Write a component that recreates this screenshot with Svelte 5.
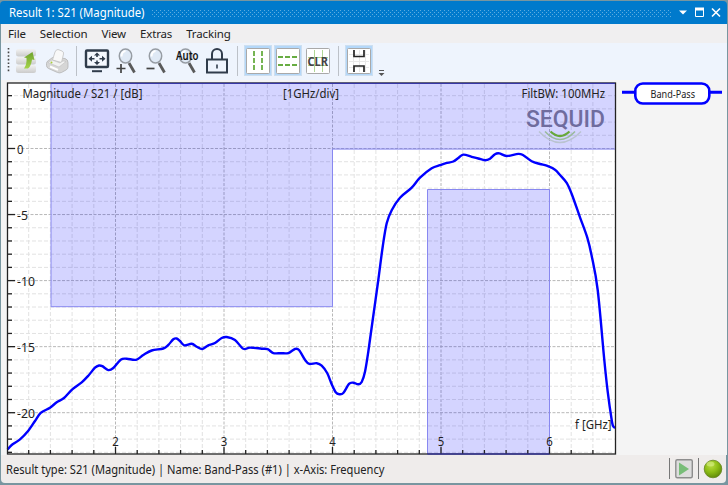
<script lang="ts">
    type Point = [number, number];

    const menus = ['File', 'Selection', 'View', 'Extras', 'Tracking'];

    /** ---------- Axis scales, in chart units ---------- */
    const fx = (ghz: number) => 115.5 + (ghz - 2) * 108.5;
    const fy = (db: number) => 148.5 - db * 13.21;

    const xs = Array.from({ length: 28 }, (_, i) => ({ v: 1.2 + i * 0.2, major: i % 5 === 4 }))
        .filter((t) => t.v < 6.5);
    const ys = Array.from({ length: 28 }, (_, i) => ({ v: 4 - i, major: (4 - i) % 5 === 0 }))
        .filter((t) => t.v > -24);

    /** ---------- Measured trace ---------- */
    const trace: Point[] = [
        [7.5, 449.5], [11.7, 445], [20, 439.3], [28.3, 430.7], [35, 421], [40.7, 412.9], [50, 407.7],
        [56.7, 402.3], [64, 398], [72.3, 389.3], [81.7, 382.3], [88.3, 375.7], [95, 367.7], [99, 365.5],
        [102.3, 366.2], [108.3, 370.1], [113.3, 368], [120.7, 359.7], [126.7, 358.7], [136, 359.8],
        [143.3, 355], [151.7, 350.5], [163.3, 348.5], [168.3, 345], [173.3, 339.3], [176.7, 338.5],
        [180, 341], [184.3, 345.3], [191.7, 343.7], [196.7, 346.7], [202.3, 349], [208.3, 345.3],
        [215, 343], [221.7, 338], [226.7, 337], [235, 340], [243.3, 348.8], [250, 347.6], [261.7, 348.7],
        [267.7, 349.2], [273.3, 353.1], [281, 353.2], [288.3, 353.1], [295, 349], [299, 350],
        [305, 359.8], [309.3, 363.9], [316.7, 363.2], [321.7, 365.7], [327.3, 373.3], [331.7, 384.3],
        [335.7, 392.3], [339.3, 394.2], [343.3, 393], [349, 383.9], [353.3, 382.7], [358.3, 384.3],
        [361.7, 382], [365, 371.7], [368.3, 351.7], [372.7, 320], [378.3, 280], [382.7, 246.7],
        [386.7, 223.3], [391.7, 210.2], [400, 197.7], [411.7, 187.7], [420, 177.7], [431.7, 168.3],
        [440, 165.2], [446, 163.2], [453.3, 161.5], [458.3, 158], [463.3, 154.6], [471.7, 156.8],
        [478.3, 158.5], [485, 160.3], [490, 158.7], [495, 154.2], [499.3, 153.4], [506.7, 156],
        [518.3, 153.9], [523.3, 155.3], [531.7, 161.2], [540, 164], [546.7, 165.7], [555, 169.7],
        [560, 175], [566.7, 182.9], [571.7, 194], [580, 217.3], [587.3, 237.7], [591.7, 256],
        [597.7, 290], [604.3, 360], [607.7, 391.7], [611.7, 420], [613.3, 426.5], [615.5, 427.7]
    ];

    // Catmull-Rom spline through the sample points
    function smooth(p: Point[]) {
        let d = `M${p[0][0]} ${p[0][1]}`;
        for (let i = 0; i < p.length - 1; i++) {
            const a = p[Math.max(i - 1, 0)];
            const b = p[i];
            const c = p[i + 1];
            const e = p[Math.min(i + 2, p.length - 1)];
            d += `C${b[0] + (c[0] - a[0]) / 6} ${b[1] + (c[1] - a[1]) / 6} `
               + `${c[0] - (e[0] - b[0]) / 6} ${c[1] - (e[1] - b[1]) / 6} ${c[0]} ${c[1]}`;
        }
        return d;
    }

    const path = smooth(trace);
</script>

<svelte:head>
    <title>Result 1: S21 (Magnitude)</title>
</svelte:head>

{#snippet lens()}
    <path d="M14.5 15.5L20 25" stroke="#5a5a5a" stroke-width="2.8" />
    <ellipse cx="11" cy="8.5" rx="6.2" ry="7" fill="#dfe9f5" stroke="#979da4" stroke-width="1.5" />
    <path d="M7 9q0-5 4-5.500" fill="none" stroke="#fff" stroke-width="2" />
{/snippet}

<div class="window">
    <header class="title">
        <svg width="728" height="23" viewBox="0 0 728 23">
            <defs>
                <pattern id="grip" x="152" y="9" width="4" height="4" patternUnits="userSpaceOnUse">
                    <path d="M0 .5h1M2 2.5h1" stroke="#5dacdf" />
                </pattern>
            </defs>
            <rect x="152" y="9" width="519" height="7" fill="url(#grip)" />
            <text x="9" y="16" textLength="135.5" lengthAdjust="spacingAndGlyphs">Result 1: S21 (Magnitude)</text>
            <path d="M679 9.5h8l-4 4z" fill="#fff" />
            <path d="M695.5 8v7.500h8V8z" fill="none" stroke="#fff" />
            <path d="M695 8h9" stroke="#fff" stroke-width="3" />
            <path d="M712 7.500l8 8M720 7.500l-8 8" stroke="#fff" stroke-width="1.6" />
        </svg>
    </header>

    <nav>
        {#each menus as menu}
            <span>{menu}</span>
        {/each}
    </nav>

    <div class="toolbar">
        <svg width="728" height="37" viewBox="0 43 728 37">
            <defs>
                <linearGradient id="metal" x2="0" y2="1">
                    <stop offset="0" stop-color="#f2f2f2" />
                    <stop offset="1" stop-color="#cbcbcb" />
                </linearGradient>
                <linearGradient id="leaf" x2="0" y2="1">
                    <stop offset="0" stop-color="#6ea32c" />
                    <stop offset="1" stop-color="#a5d34b" />
                </linearGradient>
            </defs>
            <path d="M8.5 48v24" stroke="#444" stroke-width="1.6" stroke-dasharray="1.6 2" />
            <!-- database -->
            <g fill="url(#metal)">
                <rect x="16" y="49" width="20" height="7.500" rx="2.500" />
                <rect x="16" y="57" width="20" height="7.500" rx="2.500" />
                <rect x="16" y="65" width="20" height="8" rx="2.500" />
            </g>
            <path d="M24 68.500q3-4 2.500-10.500l-2.500-.5 8.500-5.500 2 8-2.500-.5q-1 7-4 9z" fill="url(#leaf)" />
            <!-- printer -->
            <path d="M46.500 63.500q0-2 2-3l4-3 12.500 1q3 1 3 4v4.500q0 2-2 3l-4.500 2.500q-2 .8-4 0l-9-4q-2-1-2-3z" fill="#d6d6d6" stroke="#b4b4b4" stroke-width=".8" />
            <path d="M52.500 60l2.500-8q1-2.500 3-2.500l4 1.500q2 .8 1.500 3l-2 8.500z" fill="#f8f8f8" stroke="#c2c2c2" stroke-width=".8" />
            <path d="M48 62.500l11 4.500 7-5.500-3-.5-3 2-8-3z" fill="#f2f2f2" stroke="#bbb" stroke-width=".5" />
            <path d="M50 66.500l8 3.300" stroke="#fff" stroke-width="2" />
            <circle cx="51.500" cy="62.500" r="1" fill="#a9ce3b" />
            <path d="M76.5 46v30M237.5 46v30M338.5 46v30" stroke="#bcc1c8" />
            <!-- full screen -->
            <rect x="86" y="50.5" width="22" height="16.500" rx="1" fill="#f4f8fe" stroke="#303c4b" stroke-width="2.4" />
            <path d="M92 71.2h10" stroke="#303c4b" stroke-width="2" />
            <path d="M90 58.7h4.500M99.500 58.7h4.500M97 54v3M97 60.500v3" stroke="#303c4b" stroke-width="1.6" />
            <path d="M88.500 58.700l3.500-3v6zM105.500 58.700l-3.500-3v6zM97 52.500l-3 3h6zM97 65l-3-3h6z" fill="#303c4b" />
            <!-- zoom tools -->
            <g transform="translate(114.500 47.500)">{@render lens()}</g>
            <path d="M116.500 68.500h9M121 64v9" stroke="#444" stroke-width="1.7" />
            <g transform="translate(144.500 47.500)">{@render lens()}</g>
            <path d="M146.500 68.500h8" stroke="#444" stroke-width="1.7" />
            <g transform="translate(174.500 47.500)">{@render lens()}</g>
            <text x="176" y="60" textLength="22.500" lengthAdjust="spacingAndGlyphs" class="auto">Auto</text>
            <!-- lock -->
            <path d="M212 59.500V54a5 5 0 0 1 10 0v5.500" fill="none" stroke="#303c4b" stroke-width="2" />
            <rect x="207" y="59.500" width="20" height="13" fill="none" stroke="#303c4b" stroke-width="2" />
            <path d="M217 64.500v4" stroke="#303c4b" stroke-width="1.600" />
            <!-- toggle buttons -->
            <g fill="#b4d8fa" stroke="#cddff0">
                <rect x="244.500" y="45.500" width="27" height="30" />
                <rect x="274.500" y="45.500" width="27" height="30" />
                <rect x="345.500" y="45.500" width="27" height="30" />
            </g>
            <g fill="#fff" stroke="#a9a9a9">
                <rect x="246.500" y="48.500" width="23" height="25" rx="1" />
                <rect x="276.500" y="48.500" width="23" height="25" rx="1" />
                <rect x="306.500" y="48.500" width="23" height="25" rx="1" />
                <rect x="347.500" y="48.500" width="23" height="25" rx="1" />
            </g>
            <g stroke="#68ad42" stroke-width="1.800">
                <path d="M254 51v21M262 51v21" stroke-dasharray="5 2" />
                <path d="M278 57h20M278 65h20" stroke-dasharray="5 2" />
            </g>
            <path d="M314.500 50v22M322.500 50v22M308 57.500h20M308 65.500h20" stroke="#b0d795" />
            <text x="307.500" y="65.500" textLength="20.500" lengthAdjust="spacingAndGlyphs" class="clr">CLR</text>
            <path d="M353.500 50v22M359.500 50v22M365.500 50v22M349 54.500h20M349 61.500h20M349 67.500h20" stroke="#e8e8e8" />
            <path d="M354 50v6.500h10V50M354 72v-6h10v6" fill="none" stroke="#252525" stroke-width="1.700" />
            <path d="M379 70.500h5" stroke="#555" />
            <path d="M378.500 73h6l-3 3z" fill="#555" />
        </svg>
    </div>

    <main>
        <svg class="chart" width="611" height="375" viewBox="6 80 611 375">
            <rect x="7.500" y="83" width="608" height="371" fill="#fff" />
            {#each xs as t}
                <path class:major={t.major} class="grid" d="M{fx(t.v)} 84V454" />
            {/each}
            {#each ys as t}
                <path class:major={t.major} class="grid" d="M8 {fy(t.v)}H615" />
            {/each}

            <g class="mask">
                <path d="M51 83.500V306.700H332.500V149.100H615.500V83.500z" />
                <path d="M427.500 454V189.500H549.500V454z" />
            </g>

            <path class="trace" d={path} />

            <rect x="7.500" y="83" width="608" height="371" fill="none" stroke="#222" stroke-width="1.300" />
            {#each xs as t}
                <path class="tick" d="M{fx(t.v)} 454v{t.major ? -7 : -4}" />
            {/each}
            {#each ys as t}
                <path class="tick" d="M8 {fy(t.v)}h{t.major ? 7 : 4}" />
            {/each}
            <path d="M427.500 454H549.500M51 83.300H615" stroke="#3434b4" />

            {#each [0, -5, -10, -15, -20] as v}
                <text x="17" y={fy(v) + 5} textLength={v === 0 ? 6.5 : v === -5 ? 11 : 18} lengthAdjust="spacingAndGlyphs">{v}</text>
            {/each}
            {#each [2, 3, 4, 5, 6] as v}
                <text x={fx(v)} y="446" text-anchor="middle" textLength="6.5" lengthAdjust="spacingAndGlyphs">{v}</text>
            {/each}
            <text x="22.500" y="97.500" textLength="120" lengthAdjust="spacingAndGlyphs">Magnitude / S21 / [dB]</text>
            <text x="283" y="97.500" textLength="56" lengthAdjust="spacingAndGlyphs">[1GHz/div]</text>
            <text x="521.500" y="97.500" textLength="83.500" lengthAdjust="spacingAndGlyphs">FiltBW: 100MHz</text>
            <text x="575" y="429" textLength="36.500" lengthAdjust="spacingAndGlyphs">f [GHz]</text>

            <!-- logo -->
            <text x="526" y="127" textLength="79" lengthAdjust="spacingAndGlyphs" class="brand">SEQUID</text>
            <g fill="none">
                <path d="M550.500 131.500q9.500 9 19 0" stroke="#67a83b" stroke-width="2.200" />
                <path d="M545 131.500q15 16 30 0" stroke="#9aba9d" stroke-width="1.600" />
                <path d="M539 131.500q21 22 42 0" stroke="#b9c3cf" stroke-width="1.400" />
            </g>
        </svg>

        <aside>
            <svg width="102" height="26" viewBox="621 80 102 26">
                <path d="M622 92.300h13M709 92.300h13" stroke="#00f" stroke-width="3" />
                <rect x="635.300" y="83.500" width="74" height="20" rx="7.500" fill="#fff" stroke="#00f" stroke-width="2.600" />
                <text x="650.500" y="97.500" textLength="44.500" lengthAdjust="spacingAndGlyphs" class="legend">Band-Pass</text>
            </svg>
        </aside>
    </main>

    <footer>
        <svg width="728" height="28" viewBox="0 455 728 28">
            <defs>
                <radialGradient id="led" cx=".4" cy=".3" r=".75">
                    <stop offset="0" stop-color="#b9dc42" />
                    <stop offset=".5" stop-color="#8dbd16" />
                    <stop offset="1" stop-color="#5c8508" />
                </radialGradient>
            </defs>
            <text x="6" y="474" textLength="378.500" lengthAdjust="spacingAndGlyphs">Result type: S21 (Magnitude) | Name: Band-Pass (#1) | x-Axis: Frequency</text>
            <path d="M669.500 458v21M698.500 458v21" stroke="#777" />
            <rect x="675.800" y="459.800" width="16.500" height="18" rx="1.500" fill="#ddd" stroke="#8d8d8d" stroke-width="1.400" />
            <path d="M679 462.500l10 6.500-10 6.500z" fill="#78bd78" />
            <circle cx="713" cy="469" r="8.800" fill="url(#led)" stroke="#668421" stroke-width=".8" />
            <ellipse cx="710.500" cy="464" rx="4" ry="2.500" fill="#e1f39b" opacity=".5" />
        </svg>
    </footer>
</div>

<style>
    :global(body) { background: #779ca3; overflow: hidden; }

    .window {
        box-sizing: border-box;
        width: 728px;
        height: 485px;
        padding-top: 1px;
        display: flex;
        flex-direction: column;
        background: #7896a0;
        font-family: 'Noto Sans', sans-serif;
        font-size: 12px;
        color: #222;
    }
    svg   { display: block; flex: none; }
    text  { font-family: 'Noto Sans', sans-serif; font-size: 12px; fill: #222; }

    .title {
        height: 23px;
        margin-right: 1px;
        overflow: hidden;
        background: #007acc;
        border-radius: 4px 4px 0 0;
    }
    .title text { fill: #fff; }

    nav {
        height: 19px;
        margin: 0 1px;
        padding-left: 7px;
        display: flex;
        align-items: center;
        gap: 14px;
        background: #f0eff0;
        font-size: 11.5px;
        letter-spacing: -0.15px;
    }

    .toolbar { height: 37px; margin: 0 1px; overflow: hidden; background: #eef4fd; }
    .toolbar svg { margin-left: -1px; }
    .auto { font-weight: 600; fill: #111; }
    .clr  { font-size: 12px; font-weight: 700; fill: #444; }

    main { height: 375px; margin: 0 1px; padding-left: 5px; display: flex; gap: 4px; background: #f4f4f4; }
    .grid       { stroke: #e2e2e2; stroke-dasharray: 4 2; }
    .grid.major { stroke: #b8b8b8; stroke-dasharray: 3 1.5; }
    .mask path  { fill: #00f; fill-opacity: 0.17; stroke: #8888f0; }
    .trace      { fill: none; stroke: #00f; stroke-width: 2.4; stroke-linejoin: round; }
    .tick       { stroke: #222; stroke-width: 1.3; }
    .brand      { font-family: Roboto, sans-serif; font-size: 24px; font-weight: 500; fill: #6f6c9e; }
    .legend     { font-size: 10.5px; }

    footer { height: 28px; margin: 0 2px 0 1px; overflow: hidden; background: #efeceb; border-radius: 0 0 4px 4px; }
    footer svg { margin-left: -1px; }
</style>
